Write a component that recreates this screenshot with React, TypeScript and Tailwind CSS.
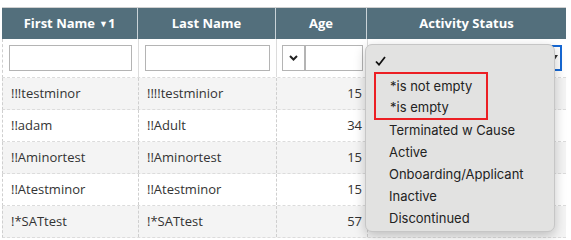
import React from 'react';

const rows = [
    { first: '!!!testminor', last: '!!!!testminior', age: 15 },
    { first: '!!adam', last: '!!Adult', age: 34 },
    { first: '!!Aminortest', last: '!!Aminortest', age: 15 },
    { first: '!!Atestminor', last: '!!Atestminor', age: 15 },
    { first: '!*SATtest', last: '!*SATtest', age: 57 },
];

const options = ['Terminated w Cause', 'Active', 'Onboarding/Applicant', 'Inactive', 'Discontinued'];

const cols = 'grid grid-cols-[136px_138px_91px_199px]';

const App: React.FC = () =>
{
    return (
        <div className="relative w-[571px] h-[240px] bg-white overflow-hidden font-['Open_Sans',sans-serif] text-[13px] text-[#333]">
            <div className="ml-[2px] mt-[7px] w-[564px] border-t border-[#d0d0d0]">
                {/* Шапка таблицы */}
                <div className={`${cols} h-[31px] bg-[#536f7c] text-white font-bold text-[13px]`}>
                    <div className="flex items-center justify-center border-r border-[#c9d3d8]">
                        First Name <span className="ml-1 text-[9px]">▼</span>1
                    </div>
                    <div className="flex items-center justify-center border-r border-[#c9d3d8]">Last Name</div>
                    <div className="flex items-center justify-center border-r border-[#c9d3d8]">Age</div>
                    <div className="flex items-center justify-center">Activity Status</div>
                </div>

                {/* Фильтры */}
                <div className={`${cols} h-[39px] bg-white border-b border-[#dcdcdc] border-l border-dashed border-l-[#cfcfcf]`}>
                    <div className="flex items-center px-[6px] border-r border-[#dcdcdc]">
                        <div className="w-full h-[26px] border border-[#b4b4b4] bg-white" />
                    </div>
                    <div className="flex items-center px-[6px] border-r border-[#dcdcdc]">
                        <div className="w-full h-[26px] border border-[#b4b4b4] bg-white" />
                    </div>
                    <div className="flex items-center pl-[5px] pr-[4px] border-r border-[#dcdcdc]">
                        <div className="flex w-full h-[26px] border border-[#b4b4b4] bg-white">
                            <div className="w-[23px] flex items-center justify-center border-r-2 border-[#b4b4b4]">
                                <svg width="9" height="6" viewBox="0 0 9 6"><path d="M1 1l3.5 3.5L8 1" fill="none" stroke="#222" strokeWidth="2" /></svg>
                            </div>
                            <div className="flex-1" />
                        </div>
                    </div>
                    <div className="flex items-center pl-[5px] pr-[5px]">
                        <div className="w-full h-[26px] border-2 border-[#1668d4] bg-white flex items-center justify-end pr-[2px]">
                            <svg width="8" height="6" viewBox="0 0 8 6"><path d="M0 0h8L4 6z" fill="#333" /></svg>
                        </div>
                    </div>
                </div>

                {/* Строки */}
                {rows.map((r, i) => (
                    <div key={i} className={`${cols} h-[32px] border-b border-[#dcdcdc] border-l border-dashed border-l-[#cfcfcf] ${i % 2 === 0 ? 'bg-[#f4f4f4]' : 'bg-white'}`}>
                        <div className="flex items-center pl-[8px] border-r border-dashed border-[#cfcfcf]">{r.first}</div>
                        <div className="flex items-center pl-[8px] border-r border-dashed border-[#cfcfcf]">{r.last}</div>
                        <div className="flex items-center justify-end pr-[5px] border-r border-dashed border-[#cfcfcf]">{r.age}</div>
                        <div />
                    </div>
                ))}
            </div>

            {/* Выпадающее меню */}
            <div className="absolute left-[365px] top-[44px] w-[190px] h-[188px] rounded-[7px] bg-[#e2e2e1] border border-[#c6c6c6] shadow-[0_4px_12px_rgba(0,0,0,0.22)] font-['Inter',sans-serif] text-[13px] text-[#222]">
                <div className="h-[22px] mt-[5px] pl-[9px] flex items-center">
                    <svg width="11" height="10" viewBox="0 0 11 10"><path d="M1 5.5l3 3.2L10 1" fill="none" stroke="#111" strokeWidth="1.8" /></svg>
                </div>
                <div className="ml-[8px] mr-[66px] border-2 border-[#ec1f24] pt-[2px]">
                    <div className="h-[22px] pl-[14px] flex items-center">*is not empty</div>
                    <div className="h-[20px] pl-[14px] flex items-center">*is empty</div>
                </div>
                {options.map(o => (
                    <div key={o} className="h-[22px] pl-[23px] flex items-center">{o}</div>
                ))}
            </div>
        </div>
    );
};

export default App;
